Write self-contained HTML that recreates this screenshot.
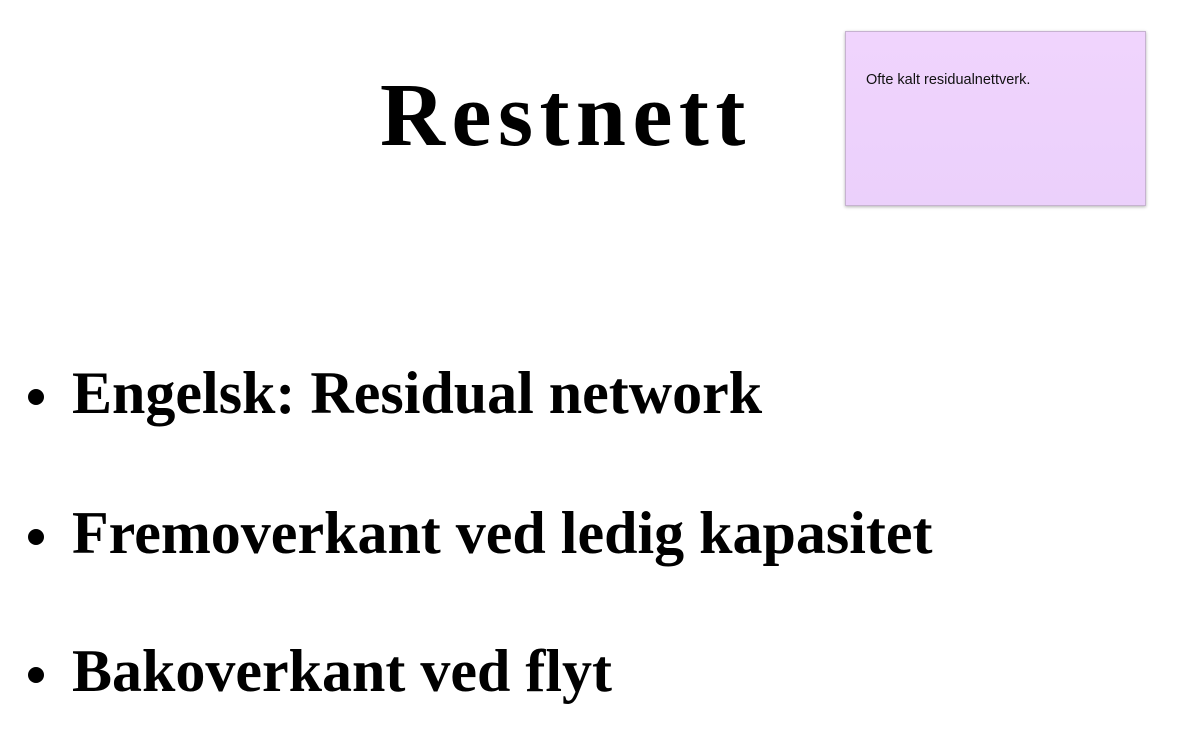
<!DOCTYPE html>
<html><head><meta charset="utf-8"><style>
html,body{margin:0;padding:0;background:#fff;}
body{width:1189px;height:748px;position:relative;overflow:hidden;font-family:"Liberation Serif",serif;font-weight:bold;color:#000;}
.t{position:absolute;white-space:nowrap;line-height:1;}
.title{font-size:90px;left:380px;top:71px;letter-spacing:6.5px;}
.b{font-size:60px;left:72px;}
.dot{position:absolute;left:28px;width:16px;height:16px;border-radius:50%;background:#000;}
.note{position:absolute;left:845px;top:31px;width:299px;height:173px;background:linear-gradient(#f0d4fd,#ebd0fb);border:1px solid #c6b2d0;box-shadow:0 1px 3px rgba(0,0,0,.3);}
.note span{position:absolute;left:20px;top:40px;font:14.5px "Liberation Sans",sans-serif;color:#111;}
</style></head><body>
<div class="t title">Restnett</div>
<div class="note"><span>Ofte kalt residualnettverk.</span></div>
<div class="dot" style="top:389px"></div>
<div class="t b" style="top:363px">Engelsk: Residual network</div>
<div class="dot" style="top:529px"></div>
<div class="t b" style="top:503px">Fremoverkant ved ledig kapasitet</div>
<div class="dot" style="top:667px"></div>
<div class="t b" style="top:641px">Bakoverkant ved flyt</div>
</body></html>
